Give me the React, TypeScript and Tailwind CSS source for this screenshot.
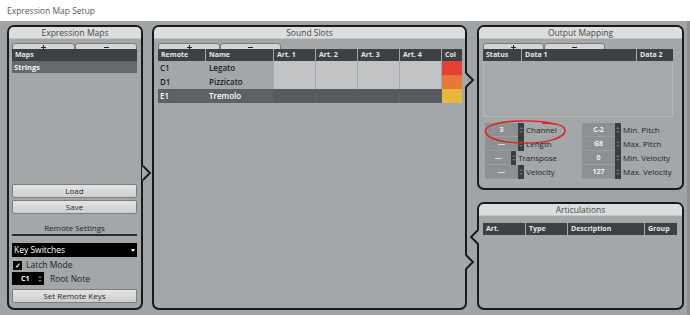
import React from 'react';

const font = "font-['Open_Sans','Noto_Sans',sans-serif]";

function PanelHeader({ title }: { title: string }) {
  return (
    <div className="h-[12px] bg-[#dcdddd] rounded-t-[5px] border-b border-[#c4c5c6] text-center text-[8.5px] leading-[12px] text-[#4b4b4b]">
      {title}
    </div>
  );
}

function Tabs({ width }: { width: number }) {
  const half = Math.round(width / 2);
  return (
    <div className="flex h-[6px] overflow-hidden" style={{ width }}>
      <div className="h-[9px] bg-[#d3d4d5] border border-[#77797b] rounded-t-[3px] flex justify-center pt-[1px]" style={{ width: half }}>
        <div className="relative w-[5px] h-[5px]">
          <div className="absolute left-0 top-[2px] w-[5px] h-px bg-[#222]" />
          <div className="absolute left-[2px] top-0 w-px h-[5px] bg-[#222]" />
        </div>
      </div>
      <div className="flex-1 h-[9px] bg-[#d3d4d5] border border-[#77797b] rounded-t-[3px] flex justify-center pt-[3px]">
        <div className="w-[5px] h-px bg-[#222]" />
      </div>
    </div>
  );
}

function HeadCell({ w, children, grow }: { w?: number; children?: React.ReactNode; grow?: boolean }) {
  return (
    <div
      className={`h-full bg-[#3e4144] text-[7px] font-bold leading-[12px] text-[#e6e6e6] pl-[3px] whitespace-nowrap ${grow ? 'flex-1' : ''}`}
      style={w ? { width: w } : undefined}
    >
      {children}
    </div>
  );
}

function Button({ label }: { label: string }) {
  return (
    <div className="h-[14px] bg-gradient-to-b from-[#e4e4e4] to-[#cdcecf] border border-[#7c7e80] rounded-[2px] text-center text-[8px] leading-[12px] text-[#2a2a2a]">
      {label}
    </div>
  );
}

function Notch({ x, y, dir, fill }: { x: number; y: number; dir: 'right' | 'left'; fill: string }) {
  const d = dir === 'right' ? 7 : -7;
  return (
    <svg className="absolute pointer-events-none" style={{ left: x - 9, top: y - 9 }} width="18" height="18" viewBox="0 0 18 18">
      <rect x="8" y="2.5" width="2" height="13" fill={fill} />
      <polyline points={`9,2 ${9 + d},9 9,16`} fill="none" stroke="#161616" strokeWidth="1.8" />
    </svg>
  );
}

const slots = [
  { remote: 'C1', name: 'Legato', color: '#e53f36', sel: false },
  { remote: 'D1', name: 'Pizzicato', color: '#e7773a', sel: false },
  { remote: 'E1', name: 'Tremolo', color: '#e8b83c', sel: true },
];

const leftFields = [
  { v: '3', l: 'Channel' },
  { v: '---', l: 'Length' },
  { v: '---', l: 'Transpose' },
  { v: '---', l: 'Velocity' },
];
const rightFields = [
  { v: 'C-2', l: 'Min. Pitch' },
  { v: 'G8', l: 'Max. Pitch' },
  { v: '0', l: 'Min. Velocity' },
  { v: '127', l: 'Max. Velocity' },
];

function FieldColumn({ items }: { items: { v: string; l: string }[] }) {
  return (
    <div className="flex flex-col">
      {items.map((f) => (
        <div key={f.l} className="flex h-[14px] items-stretch">
          <div className="w-[33px] bg-[#8e9194] border-b border-[#9a9da0] text-center text-[7px] font-bold leading-[13px] text-[#f0f0f0]">{f.v}</div>
          <div className="w-[6px] bg-[#3a3d40] flex flex-col items-center justify-center gap-[2px]">
            <div className="w-0 h-0 border-l-[2px] border-r-[2px] border-b-[2px] border-l-transparent border-r-transparent border-b-[#6d7073]" />
            <div className="w-0 h-0 border-l-[2px] border-r-[2px] border-t-[2px] border-l-transparent border-r-transparent border-t-[#6d7073]" />
          </div>
          <div className="pl-[2px] text-[8px] leading-[14px] text-[#1e1e1e] whitespace-nowrap">{f.l}</div>
        </div>
      ))}
    </div>
  );
}

export default function App() {
  const panel = 'relative border-2 border-[#1a1a1a] rounded-[7px] bg-[#a4a7a9] flex flex-col';
  return (
    <div className={`relative w-[690px] h-[315px] overflow-hidden bg-[#a1a4a6] ${font}`}>
      <div className="h-[21px] bg-white pl-[7px] text-[8.5px] leading-[21px] text-[#5b5b5b]">Expression Map Setup</div>

      <div className="flex h-[294px] pt-[4px] pl-[7px] pr-[4px]">
        {/* Expression Maps */}
        <div className={`${panel} w-[136px] h-[285px]`}>
          <PanelHeader title="Expression Maps" />
          <div className="flex flex-col flex-1 pl-[3px] pr-[4px]">
            <div className="mt-[4px]"><Tabs width={125} /></div>
            <div className="h-[12px] flex"><HeadCell grow>Maps</HeadCell></div>
            <div className="h-[12px] bg-[#66696c] pl-[2px] text-[7.5px] font-bold leading-[12px] text-[#f2f2f2]">Strings</div>
            <div className="flex-1" />
            <Button label="Load" />
            <div className="mt-[2px]"><Button label="Save" /></div>
            <div className="mt-[8px] h-[12px] text-center text-[8px] leading-[12px] text-[#1e1e1e]">Remote Settings</div>
            <div className="h-[2px] bg-[#2b2d2f]" />
            <div className="mt-[7px] h-[14px] bg-black flex items-center justify-between pl-[2px] pr-[2px]">
              <span className="text-[8.5px] leading-[14px] text-white">Key Switches</span>
              <span className="w-0 h-0 border-l-[2px] border-r-[2px] border-t-[3px] border-l-transparent border-r-transparent border-t-white" />
            </div>
            <div className="mt-[2px] h-[12px] flex items-center gap-[4px] pl-[1px]">
              <div className="w-[9px] h-[9px] bg-black flex items-center justify-center text-[7px] leading-[9px] text-white font-bold">✓</div>
              <span className="text-[8.5px] leading-[12px] text-[#1e1e1e]">Latch Mode</span>
            </div>
            <div className="mt-[1px] h-[13px] flex items-center gap-[6px]">
              <div className="w-[32px] h-[13px] bg-black flex items-center justify-between pl-[9px] pr-[2px]">
                <span className="text-[7px] font-bold leading-[13px] text-white">C1</span>
                <div className="flex flex-col gap-[2px]">
                  <div className="w-0 h-0 border-l-[2px] border-r-[2px] border-b-[2px] border-l-transparent border-r-transparent border-b-[#777]" />
                  <div className="w-0 h-0 border-l-[2px] border-r-[2px] border-t-[2px] border-l-transparent border-r-transparent border-t-[#777]" />
                </div>
              </div>
              <span className="text-[8.5px] leading-[13px] text-[#1e1e1e]">Root Note</span>
            </div>
            <div className="mt-[4px] mb-[5px]"><Button label="Set Remote Keys" /></div>
          </div>
        </div>

        {/* Sound Slots */}
        <div className={`${panel} ml-[9px] w-[315px] h-[285px]`}>
          <PanelHeader title="Sound Slots" />
          <div className="pl-[4px] pr-[3px]">
            <div className="mt-[4px]"><Tabs width={123} /></div>
            <div className="h-[12px] flex gap-px">
              <HeadCell w={47}>Remote</HeadCell>
              <HeadCell w={67}>Name</HeadCell>
              <HeadCell w={41}>Art. 1</HeadCell>
              <HeadCell w={41}>Art. 2</HeadCell>
              <HeadCell w={41}>Art. 3</HeadCell>
              <HeadCell w={41}>Art. 4</HeadCell>
              <HeadCell grow>Col</HeadCell>
            </div>
            {slots.map((s) => (
              <div key={s.remote} className={`h-[14px] flex gap-px ${s.sel ? 'bg-[#5e6164]' : ''}`}>
                <div className={`w-[47px] pl-[2px] text-[8px] font-semibold leading-[14px] ${s.sel ? 'text-white' : 'text-[#1c1c1c]'}`}>{s.remote}</div>
                <div className={`w-[67px] pl-[3px] text-[8px] font-semibold leading-[14px] ${s.sel ? 'text-white' : 'text-[#1c1c1c]'}`}>{s.name}</div>
                {[0, 1, 2, 3].map((i) => (
                  <div key={i} className={`w-[41px] ${s.sel ? 'bg-[#585b5e]' : 'bg-[#c1c3c5]'}`} />
                ))}
                <div className="flex-1" style={{ background: s.color }} />
              </div>
            ))}
          </div>
        </div>

        {/* Right column */}
        <div className="ml-[10px] w-[207px] flex flex-col">
          <div className={`${panel} h-[165px]`}>
            <PanelHeader title="Output Mapping" />
            <div className="pl-[4px] pr-[9px]">
              <div className="mt-[4px]"><Tabs width={122} /></div>
              <div className="h-[12px] flex gap-px">
                <HeadCell w={38}>Status</HeadCell>
                <HeadCell w={114}>Data 1</HeadCell>
                <HeadCell grow>Data 2</HeadCell>
              </div>
              <div className="h-[56px] bg-[#a6a9ab] border-x border-b border-[#b4b6b8]" />
            </div>
            <div className="mt-[6px] pl-[6px] flex gap-[25px]">
              <div className="w-[72px]"><FieldColumn items={leftFields} /></div>
              <FieldColumn items={rightFields} />
            </div>
          </div>

          <div className={`${panel} mt-[12px] h-[108px]`}>
            <PanelHeader title="Articulations" />
            <div className="pl-[4px] pr-[5px] mt-[7px]">
              <div className="h-[12px] flex gap-px">
                <HeadCell w={42}>Art.</HeadCell>
                <HeadCell w={41}>Type</HeadCell>
                <HeadCell w={76}>Description</HeadCell>
                <HeadCell grow>Group</HeadCell>
              </div>
            </div>
          </div>
        </div>
      </div>

      <Notch x={143} y={173} dir="right" fill="#a4a7a9" />
      <Notch x={466} y={80} dir="right" fill="#a4a7a9" />
      <Notch x={466} y={262} dir="right" fill="#a4a7a9" />
      <Notch x={478} y={237} dir="left" fill="#a4a7a9" />

      <svg className="absolute pointer-events-none" style={{ left: 480, top: 118 }} width="92" height="30" viewBox="0 0 92 30">
        <path
          d="M75 6 C 55 1, 20 2, 8 9 C 0 15, 10 24, 40 25 C 65 26, 86 20, 85 12 C 84 7, 75 5, 62 5"
          fill="none"
          stroke="#dd1f1f"
          strokeWidth="1.4"
        />
      </svg>

      <div className="absolute right-0 top-[21px] w-[3px] h-[294px] bg-[#8d9092]" />
    </div>
  );
}
